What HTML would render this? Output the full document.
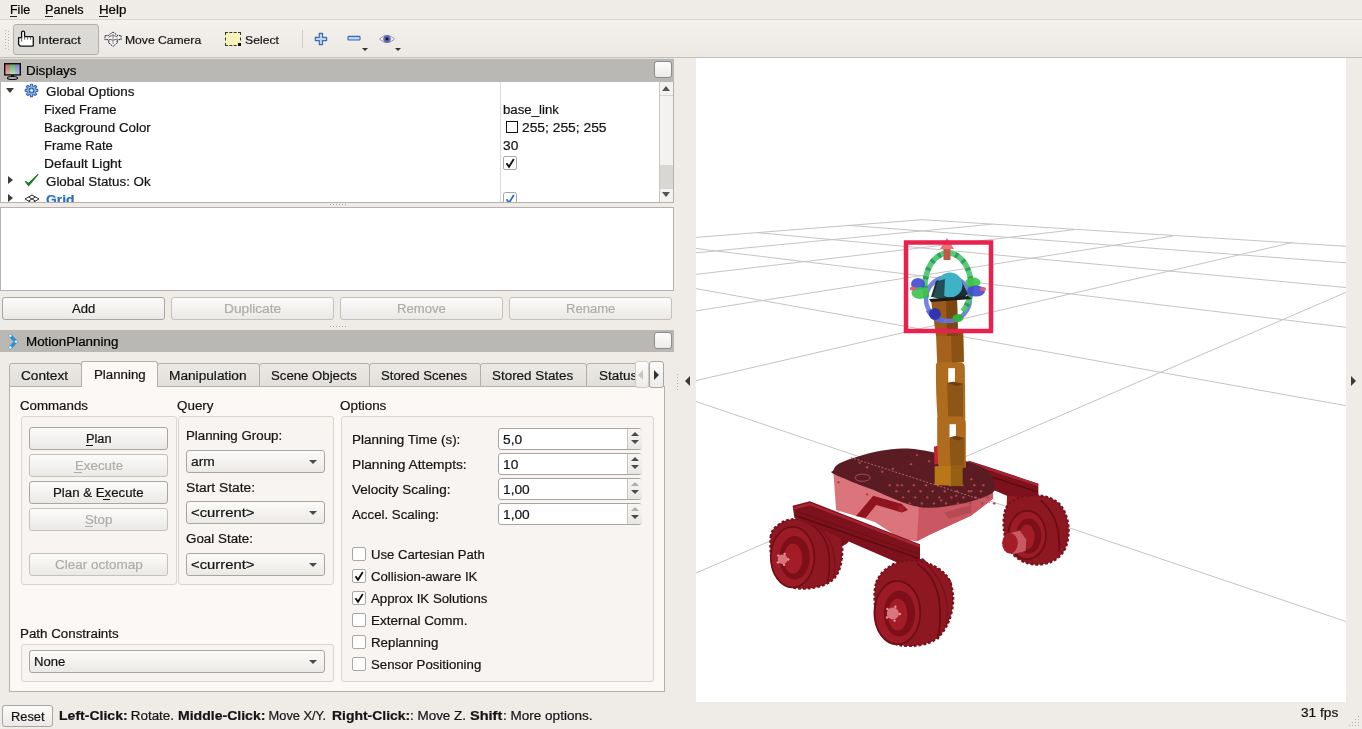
<!DOCTYPE html>
<html><head><meta charset="utf-8"><title>RViz</title>
<style>
html,body{margin:0;padding:0;}
body{width:1362px;height:729px;position:relative;overflow:hidden;background:#efebe7;font-family:"Liberation Sans",sans-serif;}
body div, body svg{position:absolute;}
.t{white-space:pre;transform-origin:0 0;will-change:transform;-webkit-text-stroke:0.2px currentColor;}
</style></head><body>
<svg style="left:696px;top:58px" width="650" height="644" viewBox="0 0 650 644"><rect width="100%" height="100%" fill="#fff"/><g stroke="#c4c4c4" stroke-width="1" fill="none"><line x1="226.1" y1="161.7" x2="0.0" y2="179.4"/><line x1="226.1" y1="161.7" x2="650.0" y2="188.3"/><line x1="296.7" y1="166.1" x2="0.0" y2="194.8"/><line x1="151.2" y1="167.3" x2="650.0" y2="204.8"/><line x1="378.1" y1="171.7" x2="0.0" y2="216.4"/><line x1="61.9" y1="174.7" x2="650.0" y2="229.5"/><line x1="476.7" y1="178.1" x2="0.0" y2="252.9"/><line x1="0.0" y1="190.5" x2="650.0" y2="269.3"/><line x1="596.5" y1="184.5" x2="0.0" y2="322.6"/><line x1="0.0" y1="230.6" x2="650.0" y2="347.7"/><line x1="650.0" y1="234.3" x2="0.0" y2="515.0"/><line x1="0.0" y1="343.5" x2="650.0" y2="563.5"/></g><g transform="translate(-696 -58)"><g transform="translate(760 440) scale(0.30189)"><path d="M250,300 C255.0,291.7 276.7,291.7 285,295 C293.3,298.3 300.0,311.7 300,320 C300.0,328.3 292.5,340.8 285,345 C277.5,349.2 260.8,352.5 255,345 C249.2,337.5 245.0,308.3 250,300 Z" fill="#7a1019" /><polygon points="690,68 760,90 922,145 922,195 835,192 760,160 700,122" fill="#7e121c" /><polygon points="692,70 922,145 921,153 693,79" fill="#a82634" /><path d="M700 100 L920 172" stroke="#5e0a10" stroke-width="5"/><polygon points="818,185 880,190 885,300 815,300" fill="#941722" /><path d="M815,225 C824.0,206.7 842.0,196.7 862,190 C882.0,183.3 912.8,180.8 935,185 C957.2,189.2 980.5,198.3 995,215 C1009.5,231.7 1019.5,260.5 1022,285 C1024.5,309.5 1020.0,342.0 1010,362 C1000.0,382.0 981.7,397.0 962,405 C942.3,413.0 913.7,415.5 892,410 C870.3,404.5 846.0,390.3 832,372 C818.0,353.7 810.8,324.5 808,300 C805.2,275.5 806.0,243.3 815,225 Z" fill="#8e1822" stroke="#761019" stroke-width="7" stroke-dasharray="9 7"/><path d="M930 200 Q1000 260 990 370" stroke="#6a0d15" stroke-width="6" fill="none"/><ellipse cx="885" cy="315" rx="62" ry="80" fill="#9c1b26" stroke="#6e0e16" stroke-width="6"/><ellipse cx="890" cy="318" rx="42" ry="58" fill="#7c0f18"/><ellipse cx="884" cy="321" rx="26" ry="41" fill="#a31c28"/><polygon points="815,312 860,300 882,330 880,368 840,378 818,360" fill="#c65a63" /><ellipse cx="828" cy="342" rx="26" ry="34" fill="#a51b27"/><polygon points="243,105 248,114 373,165 526,222 662,212 772,160 772,195 700,250 560,315 520,335 470,330 380,272 330,255 252,232" fill="#dc747c" /><polygon points="526,222 662,212 772,160 772,195 700,250 560,315 520,335" fill="#c95862" /><path d="M610 240 L700 215 L700 240 L625 262 Z" fill="#b84a54"/><path d="M243,100 C245.3,94.0 249.2,85.3 262,78 C274.8,70.7 297.0,63.0 320,56 C343.0,49.0 373.3,40.7 400,36 C426.7,31.3 451.7,27.3 480,28 C508.3,28.7 533.3,32.0 570,40 C606.7,48.0 669.2,65.7 700,76 C730.8,86.3 742.7,91.3 755,102 C767.3,112.7 771.8,127.7 774,140 C776.2,152.3 786.7,164.0 768,176 C749.3,188.0 702.3,204.3 662,212 C621.7,219.7 574.2,229.8 526,222 C477.8,214.2 419.3,183.0 373,165 C326.7,147.0 269.7,124.8 248,114 C226.3,103.2 240.7,106.0 243,100 Z" fill="#5a1c22" /><circle cx="430" cy="150" r="4" fill="#b0404a"/><circle cx="470" cy="150" r="4" fill="#b0404a"/><circle cx="510" cy="150" r="4" fill="#b0404a"/><circle cx="550" cy="150" r="4" fill="#b0404a"/><circle cx="590" cy="150" r="4" fill="#b0404a"/><circle cx="630" cy="150" r="4" fill="#b0404a"/><circle cx="670" cy="150" r="4" fill="#b0404a"/><circle cx="710" cy="150" r="4" fill="#b0404a"/><circle cx="452" cy="170" r="4" fill="#b0404a"/><circle cx="492" cy="170" r="4" fill="#b0404a"/><circle cx="532" cy="170" r="4" fill="#b0404a"/><circle cx="572" cy="170" r="4" fill="#b0404a"/><circle cx="612" cy="170" r="4" fill="#b0404a"/><circle cx="652" cy="170" r="4" fill="#b0404a"/><circle cx="692" cy="170" r="4" fill="#b0404a"/><circle cx="732" cy="170" r="4" fill="#b0404a"/><circle cx="474" cy="190" r="4" fill="#b0404a"/><circle cx="514" cy="190" r="4" fill="#b0404a"/><circle cx="554" cy="190" r="4" fill="#b0404a"/><circle cx="594" cy="190" r="4" fill="#b0404a"/><circle cx="634" cy="190" r="4" fill="#b0404a"/><circle cx="674" cy="190" r="4" fill="#b0404a"/><circle cx="714" cy="190" r="4" fill="#b0404a"/><circle cx="754" cy="190" r="4" fill="#b0404a"/><circle cx="496" cy="210" r="4" fill="#b0404a"/><circle cx="536" cy="210" r="4" fill="#b0404a"/><circle cx="576" cy="210" r="4" fill="#b0404a"/><circle cx="616" cy="210" r="4" fill="#b0404a"/><circle cx="656" cy="210" r="4" fill="#b0404a"/><circle cx="696" cy="210" r="4" fill="#b0404a"/><circle cx="736" cy="210" r="4" fill="#b0404a"/><circle cx="776" cy="210" r="4" fill="#b0404a"/><circle cx="330" cy="75" r="4" fill="#b0404a"/><circle cx="355" cy="90" r="4" fill="#b0404a"/><circle cx="405" cy="105" r="4" fill="#b0404a"/><circle cx="440" cy="95" r="4" fill="#b0404a"/><circle cx="500" cy="80" r="4" fill="#b0404a"/><circle cx="520" cy="50" r="4" fill="#b0404a"/><circle cx="560" cy="70" r="4" fill="#b0404a"/><circle cx="600" cy="95" r="4" fill="#b0404a"/><circle cx="700" cy="130" r="4" fill="#b0404a"/><circle cx="740" cy="150" r="4" fill="#b0404a"/><circle cx="700" cy="170" r="4" fill="#b0404a"/><circle cx="650" cy="185" r="4" fill="#b0404a"/><circle cx="600" cy="200" r="4" fill="#b0404a"/><circle cx="455" cy="150" r="4" fill="#b0404a"/><circle cx="260" cy="140" r="4" fill="#b0404a"/><circle cx="355" cy="180" r="4" fill="#b0404a"/><path d="M300 58 L770 210" stroke="#b07880" stroke-width="3" stroke-dasharray="6 6"/><ellipse cx="340" cy="125" rx="25" ry="12" fill="none" stroke="#b0505a" stroke-width="3"/><polygon points="576,22 590,18 594,78 578,82" fill="#c42433" /><polygon points="318,252 375,185 470,212 490,232 470,240 385,215 350,258" fill="#8e1520" /><circle cx="468" cy="228" r="11" fill="#a51c28"/></g><g transform="translate(910 320) scale(0.24691)"><path d="M105 45 Q110 30 160 32 L215 40 L218 170 L110 178 Z" fill="#a4621c"/><path d="M165 35 L215 40 L218 170 L170 175 Z" fill="#8c5214"/><path d="M105 180 Q105 172 130 172 L210 172 Q222 175 222 195 L224 400 L112 405 Q104 300 105 180 Z" fill="#b06c1e"/><path d="M155 195 L182 195 L182 258 L155 258 Z" fill="#fff"/><path d="M150 255 L175 250 L215 258 L215 392 L155 392 Z" fill="#8e5616"/><path d="M150 255 L175 250 L215 258 L190 268 Z" fill="#6e400e"/><path d="M110 398 Q112 390 140 390 L215 392 Q226 398 226 420 L226 598 L115 600 Q108 500 110 398 Z" fill="#b06c1e"/><path d="M160 422 L186 422 L186 478 L160 478 Z" fill="#fff"/><path d="M160 476 L185 470 L220 478 L220 598 L165 598 Z" fill="#8e5616"/><path d="M160 476 L185 470 L220 478 L195 488 Z" fill="#6e400e"/><path d="M100 592 L212 590 L212 672 L100 668 Z" fill="#b87818"/><path d="M165 592 L212 590 L212 672 L165 670 Z" fill="#946012"/></g><g transform="translate(760 440) scale(0.30189)"><path d="M35,322 C37.8,296.7 49.2,290.0 62,280 C74.8,270.0 89.0,263.7 112,262 C135.0,260.3 176.7,263.7 200,270 C223.3,276.3 240.0,289.2 252,300 C264.0,310.8 269.7,315.0 272,335 C274.3,355.0 272.7,397.5 266,420 C259.3,442.5 249.7,458.0 232,470 C214.3,482.0 183.7,490.0 160,492 C136.3,494.0 109.2,492.0 90,482 C70.8,472.0 54.2,458.7 45,432 C35.8,405.3 32.2,347.3 35,322 Z" fill="#8e1822" stroke="#761019" stroke-width="7" stroke-dasharray="9 7"/><path d="M160 275 Q250 320 225 470" stroke="#6a0d15" stroke-width="5" fill="none"/><path d="M185 280 Q262 340 245 455" stroke="#7a1019" stroke-width="4" fill="none"/><ellipse cx="108" cy="388" rx="72" ry="100" fill="#9c1b26" stroke="#6e0e16" stroke-width="6"/><ellipse cx="115" cy="390" rx="50" ry="72" fill="#7c0f18"/><ellipse cx="109" cy="393" rx="31" ry="50" fill="#a31c28"/><circle cx="75" cy="395" r="16" fill="#d9757c"/><circle cx="81.7" cy="377.1" r="4" fill="#e59aa0"/><circle cx="93.4" cy="396.1" r="4" fill="#e59aa0"/><circle cx="79.7" cy="413.6" r="4" fill="#e59aa0"/><circle cx="59.5" cy="405.4" r="4" fill="#e59aa0"/><circle cx="60.8" cy="382.9" r="4" fill="#e59aa0"/><polygon points="108,218 165,203 530,345 530,398 470,412 114,258" fill="#7e121c" /><polygon points="112,222 165,208 530,348 529,356 165,216 112,230" fill="#a82634" /><path d="M118 250 L525 392" stroke="#5e0a10" stroke-width="5"/><path d="M120 236 L528 378" stroke="#6a0c14" stroke-width="3"/><path d="M470 412 L540 392 L600 450 L580 465 Z" fill="#8a1420"/><ellipse cx="612" cy="482" rx="24" ry="30" fill="#b8222f"/><ellipse cx="602" cy="484" rx="13" ry="22" fill="#cf5a64"/><path d="M385,472 C391.7,452.8 403.8,437.0 420,425 C436.2,413.0 458.7,402.5 482,400 C505.3,397.5 537.0,401.3 560,410 C583.0,418.7 606.7,433.3 620,452 C633.3,470.7 639.2,497.0 640,522 C640.8,547.0 635.0,578.7 625,602 C615.0,625.3 599.2,648.7 580,662 C560.8,675.3 533.3,680.3 510,682 C486.7,683.7 459.2,682.0 440,672 C420.8,662.0 405.0,644.0 395,622 C385.0,600.0 381.7,565.0 380,540 C378.3,515.0 378.3,491.2 385,472 Z" fill="#8e1822" stroke="#761019" stroke-width="7" stroke-dasharray="9 7"/><path d="M520 410 Q620 470 590 660" stroke="#6a0d15" stroke-width="6" fill="none"/><path d="M555 415 Q640 500 615 620" stroke="#7a1019" stroke-width="4" fill="none"/><ellipse cx="455" cy="572" rx="76" ry="105" fill="#9c1b26" stroke="#6e0e16" stroke-width="6"/><ellipse cx="462" cy="575" rx="52" ry="76" fill="#7c0f18"/><ellipse cx="456" cy="578" rx="32" ry="53" fill="#a31c28"/><circle cx="440" cy="575" r="20" fill="#d9757c"/><circle cx="448.3" cy="552.6" r="4" fill="#e59aa0"/><circle cx="463.0" cy="576.4" r="4" fill="#e59aa0"/><circle cx="445.9" cy="598.2" r="4" fill="#e59aa0"/><circle cx="420.7" cy="588.0" r="4" fill="#e59aa0"/><circle cx="422.2" cy="559.8" r="4" fill="#e59aa0"/></g><polygon points="931,300 957,299 958,336 936,336" fill="#9a5a1a" /><polygon points="946,300 957,299 958,336 947,336" fill="#7a4612" /><ellipse cx="948" cy="299" rx="22" ry="22" fill="none" stroke="#6878dc" stroke-width="4.5" opacity="0.9"/><path d="M926.4 297.3 A23 33 0 1 1 962.8 311.3" fill="none" stroke="#48c870" stroke-width="5.5" opacity="0.92"/><path d="M926.4 297.3 A23 33 0 1 1 962.8 311.3" fill="none" stroke="#2a8a50" stroke-width="5.5" stroke-dasharray="3 6" opacity="0.7"/><path d="M928 310 A22 22 0 0 0 944 321" fill="none" stroke="#5a6ad8" stroke-width="5" opacity="0.95"/><ellipse cx="918" cy="284" rx="7" ry="6" fill="#4048d0" opacity="0.9"/><ellipse cx="920" cy="293" rx="8.5" ry="6" fill="#3cc24a" opacity="0.9"/><ellipse cx="913" cy="288.5" rx="3" ry="2" fill="#e06070"/><ellipse cx="973" cy="282.5" rx="7.5" ry="5" fill="#3cc24a" opacity="0.9"/><ellipse cx="976" cy="291" rx="9" ry="5.5" fill="#4048d0" opacity="0.9"/><ellipse cx="983" cy="289" rx="3" ry="2" fill="#e06070"/><ellipse cx="935" cy="314" rx="6" ry="6" fill="#2a30b0" opacity="0.9"/><ellipse cx="958" cy="318" rx="5.5" ry="4" fill="#2ab83a" opacity="0.9"/><polygon points="931,297 936,281 943,278 960,278 968,294 962,299" fill="#1a2e34" /><circle cx="950" cy="285" r="12.5" fill="#3eb3c6"/><polygon points="933,297 938,281 945,279 944,300" fill="#224e58" /><polygon points="929,299 968,296 972,299 931,302" fill="#1c1c1c" /><rect x="943.5" y="248" width="7" height="12" fill="#c05a44"/><path d="M940 249 L947 238 L954 249 Z" fill="#f07078"/><rect x="906" y="242.5" width="85" height="88.5" fill="none" stroke="#e8214f" stroke-width="4.5"/></g></svg><div class="t" style="left:10.0px;top:4px;font-size:12px;line-height:12px;color:#000;transform:scaleX(1.0380);">File</div><div style="left:10px;top:16px;width:7px;height:1px;background:#222"></div><div class="t" style="left:45.0px;top:4px;font-size:12px;line-height:12px;color:#000;transform:scaleX(1.0532);">Panels</div><div style="left:45px;top:16px;width:8px;height:1px;background:#222"></div><div class="t" style="left:99.0px;top:4px;font-size:12px;line-height:12px;color:#000;transform:scaleX(1.1089);">Help</div><div style="left:99px;top:16px;width:9px;height:1px;background:#222"></div><div style="left:0px;top:19px;width:1362px;height:1px;background:#d9d5d0"></div><div style="left:0px;top:20px;width:1362px;height:37px;background:linear-gradient(#f3f0ed,#ece9e5);"></div><div style="left:0px;top:57px;width:1362px;height:1px;background:#c2beb9"></div><div style="left:5px;top:30px;width:1px;height:1px;background:#b9b5b0"></div><div style="left:8px;top:31px;width:1px;height:1px;background:#b9b5b0"></div><div style="left:5px;top:33px;width:1px;height:1px;background:#b9b5b0"></div><div style="left:8px;top:34px;width:1px;height:1px;background:#b9b5b0"></div><div style="left:5px;top:36px;width:1px;height:1px;background:#b9b5b0"></div><div style="left:8px;top:37px;width:1px;height:1px;background:#b9b5b0"></div><div style="left:5px;top:39px;width:1px;height:1px;background:#b9b5b0"></div><div style="left:8px;top:40px;width:1px;height:1px;background:#b9b5b0"></div><div style="left:5px;top:42px;width:1px;height:1px;background:#b9b5b0"></div><div style="left:8px;top:43px;width:1px;height:1px;background:#b9b5b0"></div><div style="left:5px;top:45px;width:1px;height:1px;background:#b9b5b0"></div><div style="left:8px;top:46px;width:1px;height:1px;background:#b9b5b0"></div><div style="left:5px;top:48px;width:1px;height:1px;background:#b9b5b0"></div><div style="left:8px;top:49px;width:1px;height:1px;background:#b9b5b0"></div><div style="left:13px;top:24px;width:86px;height:31px;box-sizing:border-box;border:1px solid #b3b0ab;border-radius:3px;background:#dcdad6;"></div><svg style="left:17px;top:30px" width="18" height="18" viewBox="0 0 18 18"><path d="M6 1.2 Q4.6 1.2 4.6 2.6 L4.6 7.6 L1.6 7.6 L1.6 14.2 L3.4 16.2 L15.6 16.2 L16.3 15.5 L16.3 7.4 L15.6 6.7 L7.6 6.7 L7.6 2.6 Q7.6 1.2 6.2 1.2 Z" fill="#fff" stroke="#111" stroke-width="1.3" stroke-linejoin="round"/><path d="M4.6 7.6 V11.5 M7.6 6.7 V9.6 M10.6 6.7 V9.6 M13.5 6.7 V9.6" stroke="#555" stroke-width="0.9"/></svg><div class="t" style="left:37.6px;top:35px;font-size:11px;line-height:11px;color:#141414;transform:scaleX(1.1685);">Interact</div><svg style="left:104px;top:30px" width="18" height="18" viewBox="104 30 18 18"><path d="M113 32 L118 35.8 L121 35.5 L121 39.8 L118 39.5 L116.5 41.5 L118 42 L113 46.5 L108 42 L109.5 41.5 L108 39.5 L105 39.8 L105 35.5 L108 35.8 Z" fill="#fafafa" stroke="#1a1a1a" stroke-width="1" stroke-linejoin="round" stroke-dasharray="1.6 0.8"/><path d="M108.5 37.2 Q113 34 117.5 37.2 M108.5 39 Q113 41.5 117.5 39" fill="none" stroke="#333" stroke-width="0.8"/><path d="M113 34 V44" stroke="#999" stroke-width="1.2"/></svg><div class="t" style="left:125.0px;top:35px;font-size:11px;line-height:11px;color:#141414;transform:scaleX(1.1022);">Move Camera</div><div style="left:225px;top:32px;width:16px;height:14px;box-sizing:border-box;border:1px dashed #333;background:#f7f3b8;"></div><div style="left:238px;top:43px;width:3px;height:3px;background:#111"></div><div class="t" style="left:245.0px;top:35px;font-size:11px;line-height:11px;color:#141414;transform:scaleX(1.1093);">Select</div><div style="left:302px;top:30px;width:1px;height:18px;background:#d0ccc7"></div><svg style="left:314px;top:32px" width="14" height="14" viewBox="0 0 14 14"><path d="M5.3 1.3 H8.5 V5.3 H12.6 V8.6 H8.5 V12.6 H5.3 V8.6 H1.3 V5.3 H5.3 Z" fill="#b9d4f4" stroke="#3f6aa6" stroke-width="1.2" stroke-linejoin="round"/></svg><svg style="left:347px;top:35px" width="14" height="7" viewBox="0 0 14 7"><rect x="1" y="1.4" width="12" height="3.6" rx="0.8" fill="#b9d4f4" stroke="#3f6aa6" stroke-width="1.2"/></svg><div style="left:362px;top:48px;width:0;height:0;border-left:3.0px solid transparent;border-right:3.0px solid transparent;border-top:3px solid #333;"></div><svg style="left:378px;top:33px" width="18" height="12" viewBox="0 0 18 12"><path d="M1.5 6 Q9 -1.5 16.5 6 Q9 13.5 1.5 6 Z" fill="#f2f2f4" stroke="#9a9a9e" stroke-width="1"/><circle cx="9" cy="6" r="3.8" fill="#5b67b8"/><circle cx="9" cy="6" r="1.4" fill="#111"/></svg><div style="left:395px;top:48px;width:0;height:0;border-left:3.0px solid transparent;border-right:3.0px solid transparent;border-top:3px solid #333;"></div><div style="left:0px;top:58px;width:674px;height:1px;background:#e4e0dc"></div><div style="left:0px;top:59px;width:674px;height:23px;background:#bab8b4;"></div><svg style="left:4px;top:63px" width="17" height="17" viewBox="0 0 17 17"><defs><linearGradient id="gr" x1="0" y1="0" x2="0" y2="1"><stop offset="0" stop-color="#b86a6a"/><stop offset="1" stop-color="#e8b0b0"/></linearGradient><linearGradient id="gg" x1="0" y1="0" x2="0" y2="1"><stop offset="0" stop-color="#5cae5c"/><stop offset="1" stop-color="#b8e8b0"/></linearGradient><linearGradient id="gb" x1="0" y1="0" x2="0" y2="1"><stop offset="0" stop-color="#7a7ac8"/><stop offset="1" stop-color="#c0c0f0"/></linearGradient></defs><rect x="1" y="1" width="5" height="10.5" fill="url(#gr)"/><rect x="6" y="1" width="5" height="10.5" fill="url(#gg)"/><rect x="11" y="1" width="5" height="10.5" fill="url(#gb)"/><rect x="0.7" y="0.7" width="15.6" height="11.2" fill="none" stroke="#111" stroke-width="1.4"/><rect x="7" y="12" width="3" height="2" fill="#111"/><ellipse cx="8.5" cy="15" rx="5" ry="1.5" fill="none" stroke="#111" stroke-width="1.2"/></svg><div class="t" style="left:25.6px;top:65px;font-size:12px;line-height:12px;color:#000;transform:scaleX(1.1130);">Displays</div><div style="left:654px;top:61px;width:18px;height:17px;box-sizing:border-box;border:1px solid #8e8c89;border-radius:3px;background:linear-gradient(#fdfdfd,#ebeae8);"></div><div style="left:0px;top:82px;width:674px;height:121px;background:#fff;box-sizing:border-box;border-left:1px solid #b5b1ac;border-right:1px solid #b5b1ac;border-bottom:1px solid #b5b1ac;"></div><div style="left:500px;top:82px;width:1px;height:120px;background:#dcdcdc"></div><div style="left:6px;top:88px;width:0;height:0;border-left:4.5px solid transparent;border-right:4.5px solid transparent;border-top:5px solid #3c3c3c;"></div><svg style="left:23px;top:82px" width="17" height="17" viewBox="23 82 17 17"><path d="M35.99 89.40 L37.71 89.33 L37.71 91.47 L35.99 91.40 L35.75 92.16 L35.38 92.86 L36.64 94.04 L35.14 95.54 L33.96 94.28 L33.26 94.65 L32.50 94.89 L32.57 96.61 L30.43 96.61 L30.50 94.89 L29.74 94.65 L29.04 94.28 L27.86 95.54 L26.36 94.04 L27.62 92.86 L27.25 92.16 L27.01 91.40 L25.29 91.47 L25.29 89.33 L27.01 89.40 L27.25 88.64 L27.62 87.94 L26.36 86.76 L27.86 85.26 L29.04 86.52 L29.74 86.15 L30.50 85.91 L30.43 84.19 L32.57 84.19 L32.50 85.91 L33.26 86.15 L33.96 86.52 L35.14 85.26 L36.64 86.76 L35.38 87.94 L35.75 88.64 Z" fill="#9ec2f2" stroke="#3b66aa" stroke-width="1.1" stroke-linejoin="round"/><circle cx="31.5" cy="90.4" r="2.4" fill="#9ec2f2" stroke="#2f5a9e" stroke-width="1.1"/><circle cx="31.5" cy="90.4" r="1" fill="#fff"/></svg><div class="t" style="left:45.6px;top:86px;font-size:12px;line-height:12px;color:#141414;transform:scaleX(1.1140);">Global Options</div><div class="t" style="left:44.0px;top:104px;font-size:12px;line-height:12px;color:#141414;transform:scaleX(1.0740);">Fixed Frame</div><div class="t" style="left:44.0px;top:122px;font-size:12px;line-height:12px;color:#141414;transform:scaleX(1.1116);">Background Color</div><div class="t" style="left:44.0px;top:140px;font-size:12px;line-height:12px;color:#141414;transform:scaleX(1.0853);">Frame Rate</div><div class="t" style="left:44.0px;top:158px;font-size:12px;line-height:12px;color:#141414;transform:scaleX(1.1522);">Default Light</div><div class="t" style="left:502.5px;top:104px;font-size:12px;line-height:12px;color:#141414;transform:scaleX(1.1014);">base_link</div><div style="left:506px;top:121px;width:12px;height:12px;box-sizing:border-box;border:1px solid #111;background:#fff;"></div><div class="t" style="left:521.5px;top:122px;font-size:12px;line-height:12px;color:#141414;transform:scaleX(1.1517);">255; 255; 255</div><div class="t" style="left:502.5px;top:140px;font-size:12px;line-height:12px;color:#141414;transform:scaleX(1.1452);">30</div><div style="left:503px;top:156px;width:14px;height:14px;box-sizing:border-box;border:1px solid #aaa7a3;border-radius:2px;background:#fff;"></div><svg style="left:503px;top:156px" width="14" height="14"><path d="M3.5 7.2 L6 10.8 L10.8 3" fill="none" stroke="#111" stroke-width="1.8"/></svg><div style="left:8px;top:176px;width:0;height:0;border-top:4.5px solid transparent;border-bottom:4.5px solid transparent;border-left:5px solid #3c3c3c;"></div><svg style="left:24px;top:173px" width="15" height="14" viewBox="0 0 15 14"><path d="M1.6 8.6 L4.6 12.6 L13.8 1.6 L4.4 10.6 Z" fill="#217a25" stroke="#217a25" stroke-width="1.3" stroke-linejoin="round"/></svg><div class="t" style="left:45.6px;top:176px;font-size:12px;line-height:12px;color:#141414;transform:scaleX(1.1129);">Global Status: Ok</div><div style="left:1px;top:189px;width:658px;height:13px;overflow:hidden"><div style="left:7px;top:5px;width:0;height:0;border-top:4.5px solid transparent;border-bottom:4.5px solid transparent;border-left:5px solid #3c3c3c"></div><svg style="left:23px;top:5px" width="16" height="10" viewBox="0 0 16 10"><path d="M1 5 L8 1 L15 5 L8 9 Z M4.5 3 L11.5 7 M11.5 3 L4.5 7" fill="none" stroke="#333" stroke-width="1"/></svg></div><div style="left:0;top:189px;width:659px;height:13px;overflow:hidden"><div class="t" style="left:45.6px;top:5px;font-size:12px;line-height:12px;color:#2a6fc4;font-weight:bold;transform:scaleX(1.1546);">Grid</div><svg style="left:503px;top:3px" width="14" height="14"><rect x="0.5" y="0.5" width="13" height="13" fill="#fff" stroke="#aaa7a3" rx="2"/><path d="M3.5 7.2 L6 10.8 L10.8 3" fill="none" stroke="#2a6fc4" stroke-width="1.8"/></svg></div><div style="left:659px;top:82px;width:14px;height:120px;background:#f4f2f0;border-left:1px solid #c9c6c2;box-sizing:border-box;"></div><div style="left:660px;top:95px;width:13px;height:1px;background:#d8d5d1"></div><div style="left:660px;top:188px;width:13px;height:1px;background:#d8d5d1"></div><div style="left:660px;top:165px;width:13px;height:23px;background:#d9d7d3;"></div><div style="left:662px;top:86px;width:0;height:0;border-left:4.5px solid transparent;border-right:4.5px solid transparent;border-bottom:5px solid #555;"></div><div style="left:662px;top:192px;width:0;height:0;border-left:4.5px solid transparent;border-right:4.5px solid transparent;border-top:5px solid #555;"></div><div style="left:330px;top:204px;width:1px;height:1px;background:#a8a4a0"></div><div style="left:333px;top:204px;width:1px;height:1px;background:#a8a4a0"></div><div style="left:336px;top:204px;width:1px;height:1px;background:#a8a4a0"></div><div style="left:339px;top:204px;width:1px;height:1px;background:#a8a4a0"></div><div style="left:342px;top:204px;width:1px;height:1px;background:#a8a4a0"></div><div style="left:345px;top:204px;width:1px;height:1px;background:#a8a4a0"></div><div style="left:0px;top:207px;width:674px;height:84px;box-sizing:border-box;border:1px solid #b5b1ac;background:#fff;"></div><div style="left:2px;top:297px;width:163px;height:23px;box-sizing:border-box;border:1px solid #a9a6a2;border-radius:3px;background:linear-gradient(#fbfbfa,#ebe9e6);"></div><div class="t" style="left:71.9px;top:303px;font-size:12px;line-height:12px;color:#141414;transform:scaleX(1.0893);">Add</div><div style="left:171px;top:297px;width:163px;height:23px;box-sizing:border-box;border:1px solid #c4c1bd;border-radius:3px;background:linear-gradient(#fbfbfa,#ebe9e6);"></div><div class="t" style="left:223.9px;top:303px;font-size:12px;line-height:12px;color:#aeacaa;transform:scaleX(1.1427);">Duplicate</div><div style="left:340px;top:297px;width:163px;height:23px;box-sizing:border-box;border:1px solid #c4c1bd;border-radius:3px;background:linear-gradient(#fbfbfa,#ebe9e6);"></div><div class="t" style="left:397.1px;top:303px;font-size:12px;line-height:12px;color:#aeacaa;transform:scaleX(1.0906);">Remove</div><div style="left:509px;top:297px;width:163px;height:23px;box-sizing:border-box;border:1px solid #c4c1bd;border-radius:3px;background:linear-gradient(#fbfbfa,#ebe9e6);"></div><div class="t" style="left:565.9px;top:303px;font-size:12px;line-height:12px;color:#aeacaa;transform:scaleX(1.0858);">Rename</div><div style="left:330px;top:326px;width:1px;height:1px;background:#a8a4a0"></div><div style="left:333px;top:326px;width:1px;height:1px;background:#a8a4a0"></div><div style="left:336px;top:326px;width:1px;height:1px;background:#a8a4a0"></div><div style="left:339px;top:326px;width:1px;height:1px;background:#a8a4a0"></div><div style="left:342px;top:326px;width:1px;height:1px;background:#a8a4a0"></div><div style="left:345px;top:326px;width:1px;height:1px;background:#a8a4a0"></div><div style="left:0px;top:330px;width:674px;height:22px;background:#bab8b4;"></div><svg style="left:0px;top:328px" width="24" height="24" viewBox="0 328 24 24"><path d="M10.3 335.8 L15.9 341.6 L10.3 347.5" fill="none" stroke="#2f8fd2" stroke-width="3.4" stroke-linejoin="round" stroke-linecap="round"/><circle cx="10.3" cy="335.8" r="1.2" fill="#fff"/><circle cx="15.9" cy="341.6" r="1.2" fill="#fff"/><circle cx="10.3" cy="347.5" r="1.2" fill="#fff"/></svg><div class="t" style="left:26.3px;top:336px;font-size:12px;line-height:12px;color:#000;transform:scaleX(1.1169);">MotionPlanning</div><div style="left:654px;top:332px;width:18px;height:17px;box-sizing:border-box;border:1px solid #8e8c89;border-radius:3px;background:linear-gradient(#fdfdfd,#ebeae8);"></div><div style="left:9px;top:386px;width:656px;height:306px;box-sizing:border-box;border:1px solid #b3afab;background:#fbf8f5;"></div><div style="left:9px;top:363px;width:73px;height:24px;box-sizing:border-box;border:1px solid #b3afab;border-radius:3px 3px 0 0;background:linear-gradient(#ebe9e6,#e2dfdb);"></div><div class="t" style="left:21.0px;top:370px;font-size:12px;line-height:12px;color:#141414;transform:scaleX(1.1376);">Context</div><div style="left:157px;top:363px;width:103px;height:24px;box-sizing:border-box;border:1px solid #b3afab;border-radius:3px 3px 0 0;background:linear-gradient(#ebe9e6,#e2dfdb);"></div><div class="t" style="left:169.0px;top:370px;font-size:12px;line-height:12px;color:#141414;transform:scaleX(1.1398);">Manipulation</div><div style="left:259px;top:363px;width:111px;height:24px;box-sizing:border-box;border:1px solid #b3afab;border-radius:3px 3px 0 0;background:linear-gradient(#ebe9e6,#e2dfdb);"></div><div class="t" style="left:270.9px;top:370px;font-size:12px;line-height:12px;color:#141414;transform:scaleX(1.0993);">Scene Objects</div><div style="left:369px;top:363px;width:112px;height:24px;box-sizing:border-box;border:1px solid #b3afab;border-radius:3px 3px 0 0;background:linear-gradient(#ebe9e6,#e2dfdb);"></div><div class="t" style="left:381.3px;top:370px;font-size:12px;line-height:12px;color:#141414;transform:scaleX(1.0933);">Stored Scenes</div><div style="left:480px;top:363px;width:107px;height:24px;box-sizing:border-box;border:1px solid #b3afab;border-radius:3px 3px 0 0;background:linear-gradient(#ebe9e6,#e2dfdb);"></div><div class="t" style="left:492.2px;top:370px;font-size:12px;line-height:12px;color:#141414;transform:scaleX(1.1174);">Stored States</div><div style="left:586px;top:363px;width:49px;height:24px;overflow:hidden"><div style="left:0;top:0;width:80px;height:24px;box-sizing:border-box;border:1px solid #b3afab;border-radius:3px 3px 0 0;background:linear-gradient(#ebe9e6,#e2dfdb);"></div><div class="t" style="left:13.0px;top:7px;font-size:12px;line-height:12px;color:#141414;transform:scaleX(1.1250);">Status</div></div><div style="left:81px;top:361px;width:77px;height:26px;box-sizing:border-box;border:1px solid #b3afab;border-bottom:none;border-radius:3px 3px 0 0;background:#fbf8f5;"></div><div class="t" style="left:93.6px;top:369px;font-size:12px;line-height:12px;color:#141414;transform:scaleX(1.1071);">Planning</div><div style="left:635px;top:361px;width:14px;height:27px;box-sizing:border-box;border:1px solid #cfccc8;border-radius:3px;background:linear-gradient(#fbfbfa,#efedea);"></div><div style="left:638px;top:370px;width:0;height:0;border-top:5.0px solid transparent;border-bottom:5.0px solid transparent;border-right:5px solid #c8c6c3;"></div><div style="left:649px;top:361px;width:15px;height:27px;box-sizing:border-box;border:1px solid #a9a6a2;border-radius:3px;background:linear-gradient(#fbfbfa,#efedea);"></div><div style="left:654px;top:370px;width:0;height:0;border-top:5.0px solid transparent;border-bottom:5.0px solid transparent;border-left:5px solid #333;"></div><div class="t" style="left:20.3px;top:400px;font-size:12px;line-height:12px;color:#141414;transform:scaleX(1.1072);">Commands</div><div class="t" style="left:177.2px;top:400px;font-size:12px;line-height:12px;color:#141414;transform:scaleX(1.1172);">Query</div><div class="t" style="left:340.2px;top:400px;font-size:12px;line-height:12px;color:#141414;transform:scaleX(1.1202);">Options</div><div style="left:21px;top:416px;width:156px;height:169px;box-sizing:border-box;border:1px solid #d9d6d2;border-radius:3px;background:#f7f4f1;"></div><div style="left:178px;top:416px;width:156px;height:169px;box-sizing:border-box;border:1px solid #d9d6d2;border-radius:3px;background:#f7f4f1;"></div><div style="left:341px;top:416px;width:313px;height:266px;box-sizing:border-box;border:1px solid #d9d6d2;border-radius:3px;background:#f7f4f1;"></div><div style="left:29px;top:427px;width:139px;height:23px;box-sizing:border-box;border:1px solid #a9a6a2;border-radius:3px;background:linear-gradient(#fbfbfa,#ebe9e6);"></div><div class="t" style="left:85.7px;top:433px;font-size:12px;line-height:12px;color:#141414;transform:scaleX(1.0631);">Plan</div><div style="left:86px;top:445px;width:7px;height:1px;background:#141414;"></div><div style="left:29px;top:454px;width:139px;height:23px;box-sizing:border-box;border:1px solid #c4c1bd;border-radius:3px;background:linear-gradient(#fbfbfa,#ebe9e6);"></div><div class="t" style="left:74.5px;top:460px;font-size:12px;line-height:12px;color:#aeacaa;transform:scaleX(1.1074);">Execute</div><div style="left:74px;top:472px;width:8px;height:1px;background:#aeacaa;"></div><div style="left:29px;top:481px;width:139px;height:23px;box-sizing:border-box;border:1px solid #a9a6a2;border-radius:3px;background:linear-gradient(#fbfbfa,#ebe9e6);"></div><div class="t" style="left:53.2px;top:487px;font-size:12px;line-height:12px;color:#141414;transform:scaleX(1.1036);">Plan &amp; Execute</div><div style="left:103px;top:499px;width:7px;height:1px;background:#141414;"></div><div style="left:29px;top:508px;width:139px;height:23px;box-sizing:border-box;border:1px solid #c4c1bd;border-radius:3px;background:linear-gradient(#fbfbfa,#ebe9e6);"></div><div class="t" style="left:84.9px;top:514px;font-size:12px;line-height:12px;color:#aeacaa;transform:scaleX(1.1064);">Stop</div><div style="left:85px;top:526px;width:8px;height:1px;background:#aeacaa;"></div><div style="left:29px;top:553px;width:139px;height:23px;box-sizing:border-box;border:1px solid #c4c1bd;border-radius:3px;background:linear-gradient(#fbfbfa,#ebe9e6);"></div><div class="t" style="left:54.6px;top:559px;font-size:12px;line-height:12px;color:#aeacaa;transform:scaleX(1.1260);">Clear octomap</div><div class="t" style="left:185.8px;top:430px;font-size:12px;line-height:12px;color:#141414;transform:scaleX(1.1085);">Planning Group:</div><div style="left:186px;top:450px;width:139px;height:23px;box-sizing:border-box;border:1px solid #a9a6a2;border-radius:3px;background:linear-gradient(#fbfbfa,#ebe9e6);"></div><div class="t" style="left:191.0px;top:456px;font-size:12px;line-height:12px;color:#141414;transform:scaleX(1.1504);">arm</div><div style="left:309px;top:460px;width:0;height:0;border-left:4px solid transparent;border-right:4px solid transparent;border-top:4.5px solid #4a4a4a;"></div><div class="t" style="left:185.8px;top:482px;font-size:12px;line-height:12px;color:#141414;transform:scaleX(1.1498);">Start State:</div><div style="left:186px;top:501px;width:139px;height:23px;box-sizing:border-box;border:1px solid #a9a6a2;border-radius:3px;background:linear-gradient(#fbfbfa,#ebe9e6);"></div><div class="t" style="left:191.0px;top:507px;font-size:12px;line-height:12px;color:#141414;transform:scaleX(1.2348);">&lt;current&gt;</div><div style="left:309px;top:511px;width:0;height:0;border-left:4px solid transparent;border-right:4px solid transparent;border-top:4.5px solid #4a4a4a;"></div><div class="t" style="left:185.8px;top:533px;font-size:12px;line-height:12px;color:#141414;transform:scaleX(1.1161);">Goal State:</div><div style="left:186px;top:553px;width:139px;height:23px;box-sizing:border-box;border:1px solid #a9a6a2;border-radius:3px;background:linear-gradient(#fbfbfa,#ebe9e6);"></div><div class="t" style="left:191.0px;top:559px;font-size:12px;line-height:12px;color:#141414;transform:scaleX(1.2348);">&lt;current&gt;</div><div style="left:309px;top:563px;width:0;height:0;border-left:4px solid transparent;border-right:4px solid transparent;border-top:4.5px solid #4a4a4a;"></div><div class="t" style="left:352.2px;top:434px;font-size:12px;line-height:12px;color:#141414;transform:scaleX(1.1205);">Planning Time (s):</div><div style="left:498px;top:428px;width:144px;height:22px;box-sizing:border-box;border:1px solid #a9a6a2;border-radius:3px;background:#fff;"></div><div style="left:627px;top:429px;width:14px;height:20px;background:linear-gradient(#f7f6f4,#e9e7e4);border-left:1px solid #c9c6c2;border-radius:0 2px 2px 0;"></div><div class="t" style="left:503.0px;top:434px;font-size:12px;line-height:12px;color:#141414;transform:scaleX(1.1453);">5,0</div><div style="left:631px;top:432px;width:0;height:0;border-left:4px solid transparent;border-right:4px solid transparent;border-bottom:4px solid #4a4a4a;"></div><div style="left:631px;top:440px;width:0;height:0;border-left:4px solid transparent;border-right:4px solid transparent;border-top:4px solid #4a4a4a;"></div><div class="t" style="left:352.2px;top:459px;font-size:12px;line-height:12px;color:#141414;transform:scaleX(1.1459);">Planning Attempts:</div><div style="left:498px;top:453px;width:144px;height:22px;box-sizing:border-box;border:1px solid #a9a6a2;border-radius:3px;background:#fff;"></div><div style="left:627px;top:454px;width:14px;height:20px;background:linear-gradient(#f7f6f4,#e9e7e4);border-left:1px solid #c9c6c2;border-radius:0 2px 2px 0;"></div><div class="t" style="left:503.0px;top:459px;font-size:12px;line-height:12px;color:#141414;transform:scaleX(1.1452);">10</div><div style="left:631px;top:457px;width:0;height:0;border-left:4px solid transparent;border-right:4px solid transparent;border-bottom:4px solid #4a4a4a;"></div><div style="left:631px;top:465px;width:0;height:0;border-left:4px solid transparent;border-right:4px solid transparent;border-top:4px solid #4a4a4a;"></div><div class="t" style="left:352.2px;top:484px;font-size:12px;line-height:12px;color:#141414;transform:scaleX(1.1261);">Velocity Scaling:</div><div style="left:498px;top:478px;width:144px;height:22px;box-sizing:border-box;border:1px solid #a9a6a2;border-radius:3px;background:#fff;"></div><div style="left:627px;top:479px;width:14px;height:20px;background:linear-gradient(#f7f6f4,#e9e7e4);border-left:1px solid #c9c6c2;border-radius:0 2px 2px 0;"></div><div class="t" style="left:503.0px;top:484px;font-size:12px;line-height:12px;color:#141414;transform:scaleX(1.1452);">1,00</div><div style="left:631px;top:482px;width:0;height:0;border-left:4px solid transparent;border-right:4px solid transparent;border-bottom:4px solid #b0aeab;"></div><div style="left:631px;top:490px;width:0;height:0;border-left:4px solid transparent;border-right:4px solid transparent;border-top:4px solid #4a4a4a;"></div><div class="t" style="left:352.2px;top:509px;font-size:12px;line-height:12px;color:#141414;transform:scaleX(1.1062);">Accel. Scaling:</div><div style="left:498px;top:503px;width:144px;height:22px;box-sizing:border-box;border:1px solid #a9a6a2;border-radius:3px;background:#fff;"></div><div style="left:627px;top:504px;width:14px;height:20px;background:linear-gradient(#f7f6f4,#e9e7e4);border-left:1px solid #c9c6c2;border-radius:0 2px 2px 0;"></div><div class="t" style="left:503.0px;top:509px;font-size:12px;line-height:12px;color:#141414;transform:scaleX(1.1452);">1,00</div><div style="left:631px;top:507px;width:0;height:0;border-left:4px solid transparent;border-right:4px solid transparent;border-bottom:4px solid #b0aeab;"></div><div style="left:631px;top:515px;width:0;height:0;border-left:4px solid transparent;border-right:4px solid transparent;border-top:4px solid #4a4a4a;"></div><div style="left:352px;top:547px;width:14px;height:14px;box-sizing:border-box;border:1px solid #aaa7a3;border-radius:2px;background:#fff;"></div><div class="t" style="left:371.4px;top:549px;font-size:12px;line-height:12px;color:#141414;transform:scaleX(1.0933);">Use Cartesian Path</div><div style="left:352px;top:569px;width:14px;height:14px;box-sizing:border-box;border:1px solid #aaa7a3;border-radius:2px;background:#fff;"></div><svg style="left:352px;top:569px" width="14" height="14"><path d="M3.5 7.2 L6 10.8 L10.8 3" fill="none" stroke="#111" stroke-width="1.8"/></svg><div class="t" style="left:371.4px;top:571px;font-size:12px;line-height:12px;color:#141414;transform:scaleX(1.1000);">Collision-aware IK</div><div style="left:352px;top:591px;width:14px;height:14px;box-sizing:border-box;border:1px solid #aaa7a3;border-radius:2px;background:#fff;"></div><svg style="left:352px;top:591px" width="14" height="14"><path d="M3.5 7.2 L6 10.8 L10.8 3" fill="none" stroke="#111" stroke-width="1.8"/></svg><div class="t" style="left:371.4px;top:593px;font-size:12px;line-height:12px;color:#141414;transform:scaleX(1.1047);">Approx IK Solutions</div><div style="left:352px;top:613px;width:14px;height:14px;box-sizing:border-box;border:1px solid #aaa7a3;border-radius:2px;background:#fff;"></div><div class="t" style="left:371.4px;top:615px;font-size:12px;line-height:12px;color:#141414;transform:scaleX(1.1223);">External Comm.</div><div style="left:352px;top:635px;width:14px;height:14px;box-sizing:border-box;border:1px solid #aaa7a3;border-radius:2px;background:#fff;"></div><div class="t" style="left:371.4px;top:637px;font-size:12px;line-height:12px;color:#141414;transform:scaleX(1.1083);">Replanning</div><div style="left:352px;top:657px;width:14px;height:14px;box-sizing:border-box;border:1px solid #aaa7a3;border-radius:2px;background:#fff;"></div><div class="t" style="left:371.4px;top:659px;font-size:12px;line-height:12px;color:#141414;transform:scaleX(1.1020);">Sensor Positioning</div><div class="t" style="left:20.3px;top:628px;font-size:12px;line-height:12px;color:#141414;transform:scaleX(1.1124);">Path Constraints</div><div style="left:21px;top:644px;width:313px;height:38px;box-sizing:border-box;border:1px solid #d9d6d2;border-radius:3px;background:#f7f4f1;"></div><div style="left:29px;top:650px;width:296px;height:23px;box-sizing:border-box;border:1px solid #a9a6a2;border-radius:3px;background:linear-gradient(#fbfbfa,#ebe9e6);"></div><div class="t" style="left:34.0px;top:656px;font-size:12px;line-height:12px;color:#141414;transform:scaleX(1.0920);">None</div><div style="left:309px;top:660px;width:0;height:0;border-left:4px solid transparent;border-right:4px solid transparent;border-top:4.5px solid #4a4a4a;"></div><div style="left:2px;top:705px;width:51px;height:22px;box-sizing:border-box;border:1px solid #a9a6a2;border-radius:3px;background:linear-gradient(#fbfbfa,#ebe9e6);"></div><div class="t" style="left:10.7px;top:711px;font-size:12px;line-height:12px;color:#141414;transform:scaleX(1.0703);">Reset</div><div class="t" style="left:58.5px;top:710px;font-size:12px;line-height:12px;color:#141414;font-weight:bold;transform:scaleX(1.1699);">Left-Click:</div><div class="t" style="left:127.1px;top:710px;font-size:12px;line-height:12px;color:#141414;transform:scaleX(1.1196);"> Rotate. </div><div class="t" style="left:177.9px;top:710px;font-size:12px;line-height:12px;color:#141414;font-weight:bold;transform:scaleX(1.1706);">Middle-Click:</div><div class="t" style="left:265.3px;top:710px;font-size:12px;line-height:12px;color:#141414;transform:scaleX(1.0690);"> Move X/Y. </div><div class="t" style="left:332.0px;top:710px;font-size:12px;line-height:12px;color:#141414;font-weight:bold;transform:scaleX(1.1604);">Right-Click:</div><div class="t" style="left:410.1px;top:710px;font-size:12px;line-height:12px;color:#141414;transform:scaleX(1.1202);">: Move Z. </div><div class="t" style="left:470.3px;top:710px;font-size:12px;line-height:12px;color:#141414;font-weight:bold;transform:scaleX(1.2098);">Shift</div><div class="t" style="left:502.6px;top:710px;font-size:12px;line-height:12px;color:#141414;transform:scaleX(1.1274);">: More options.</div><div class="t" style="left:1300.6px;top:707px;font-size:12px;line-height:12px;color:#141414;transform:scaleX(1.1382);">31 fps</div><div style="left:1358px;top:716px;width:1px;height:1px;background:#b5b1ac"></div><div style="left:1355px;top:719px;width:1px;height:1px;background:#b5b1ac"></div><div style="left:1358px;top:719px;width:1px;height:1px;background:#b5b1ac"></div><div style="left:1352px;top:722px;width:1px;height:1px;background:#b5b1ac"></div><div style="left:1355px;top:722px;width:1px;height:1px;background:#b5b1ac"></div><div style="left:1358px;top:722px;width:1px;height:1px;background:#b5b1ac"></div><div style="left:1349px;top:725px;width:1px;height:1px;background:#b5b1ac"></div><div style="left:1352px;top:725px;width:1px;height:1px;background:#b5b1ac"></div><div style="left:1355px;top:725px;width:1px;height:1px;background:#b5b1ac"></div><div style="left:1358px;top:725px;width:1px;height:1px;background:#b5b1ac"></div><div style="left:677px;top:374px;width:1px;height:1px;background:#b5b1ac"></div><div style="left:677px;top:377px;width:1px;height:1px;background:#b5b1ac"></div><div style="left:677px;top:380px;width:1px;height:1px;background:#b5b1ac"></div><div style="left:677px;top:383px;width:1px;height:1px;background:#b5b1ac"></div><div style="left:677px;top:386px;width:1px;height:1px;background:#b5b1ac"></div><div style="left:677px;top:389px;width:1px;height:1px;background:#b5b1ac"></div><div style="left:685px;top:376px;width:0;height:0;border-top:5.0px solid transparent;border-bottom:5.0px solid transparent;border-right:5px solid #3a3a3a;"></div><div style="left:1351px;top:376px;width:0;height:0;border-top:5.0px solid transparent;border-bottom:5.0px solid transparent;border-left:5px solid #3a3a3a;"></div>
</body></html>
